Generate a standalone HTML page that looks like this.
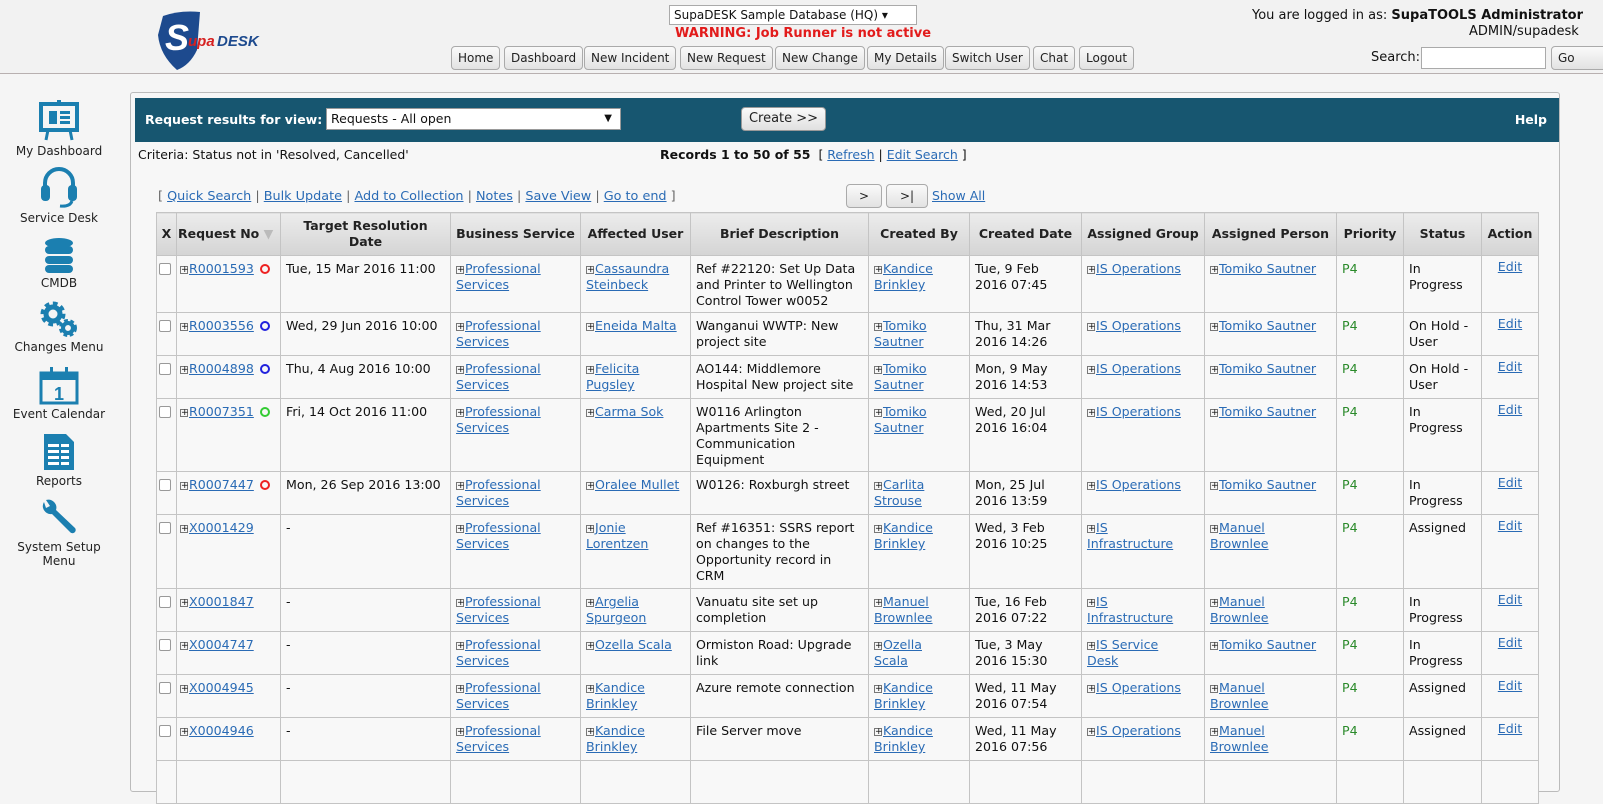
<!DOCTYPE html>
<html><head><meta charset="utf-8"><style>
*{box-sizing:border-box}
body{margin:0;width:1603px;height:784px;overflow:hidden;background:#f5f5f5;font-family:"DejaVu Sans","Liberation Sans",sans-serif;font-size:12px;color:#111;position:relative}
a{color:#2a6bb5;text-decoration:underline}
.top{position:absolute;left:0;top:0;width:1603px;height:74px;background:#f2f2f2;border-bottom:1px solid #b8b0b0}
.btn{position:absolute;top:46px;height:24px;border:1px solid #aaa;border-radius:4px;background:linear-gradient(#fafafa,#e2e2e2);font-size:12px;line-height:22px;padding:0 6px;color:#222}
.side{position:absolute;left:0;width:118px;text-align:center;font-size:12px;color:#222}
.side svg{display:block;margin:0 auto 2px}
.panel{position:absolute;left:130px;top:92px;width:1430px;height:700px;border:1px solid #bbb;background:#f7f7f7;border-radius:3px}
.bar{position:absolute;left:135px;top:98px;width:1424px;height:44px;background:#175670;color:#fff;font-weight:bold;font-size:12.5px}
table{position:absolute;left:156px;top:212px;border-collapse:collapse;table-layout:fixed;width:1382px}
td,th{border:1px solid #c4c4c4;vertical-align:top;padding:5px 5px 0 5px;line-height:16px;font-size:12.6px;white-space:nowrap;overflow:hidden}
th{background:linear-gradient(#ececec,#d4d4d4);font-size:12.5px;vertical-align:middle;padding:0 3px;color:#222}
td{background:#f8f8f8}
.p{font-size:9px;border:1px solid #777;display:inline-block;width:8px;height:8px;line-height:6px;text-align:center;margin-right:1px;vertical-align:1px}
.g{color:#2a8a2a}
.cb{width:12px;height:12px;border:1px solid #999;border-radius:2px;background:#fff;display:block;margin:2px 0 0 -1px}
.o{display:inline-block;width:10px;height:10px;border-radius:50%;border:2px solid;margin-left:6px;vertical-align:-1px}
</style></head><body>
<div class="top">
<svg style="position:absolute;left:155px;top:10px" width="135" height="62"><path d="M8 6 Q25 0 45 2 L42 40 Q35 55 22 60 Q5 45 3 25 Z" fill="#1d4a8e"/><text x="10" y="40" font-family="Liberation Sans" font-weight="bold" font-style="italic" font-size="36" fill="#fff">S</text><text x="33" y="36" font-family="Liberation Sans" font-weight="bold" font-style="italic" font-size="15" fill="#d62020">upa</text><text x="62" y="36" font-family="Liberation Sans" font-weight="bold" font-style="italic" font-size="15" fill="#1d4a8e">DESK</text></svg>
<div style="position:absolute;left:669px;top:5px;width:248px;height:20px;border:1px solid #aaa;background:#fff;font-size:12px;line-height:18px;padding-left:4px">SupaDESK Sample Database (HQ) ▾</div>
<div style="position:absolute;left:675px;top:26px;color:#e21b1b;font-weight:bold;font-size:13px">WARNING: Job Runner is not active</div>
<div class="btn" style="left:451px">Home</div><div class="btn" style="left:504px">Dashboard</div><div class="btn" style="left:584px">New Incident</div><div class="btn" style="left:680px">New Request</div><div class="btn" style="left:775px">New Change</div><div class="btn" style="left:867px">My Details</div><div class="btn" style="left:945px">Switch User</div><div class="btn" style="left:1033px">Chat</div><div class="btn" style="left:1079px">Logout</div>
<div style="position:absolute;left:1252px;top:8px;font-size:13px;white-space:nowrap">You are logged in as: <b>SupaTOOLS Administrator</b></div>
<div style="position:absolute;left:1469px;top:24px;font-size:13px;white-space:nowrap">ADMIN/supadesk</div>
<div style="position:absolute;left:1371px;top:50px;font-size:13px">Search:</div>
<div style="position:absolute;left:1421px;top:47px;width:125px;height:22px;border:1px solid #aaa;background:#fff"></div>
<div class="btn" style="left:1551px;width:60px">Go</div>
</div>
<div class="side" style="top:100px"><svg width="42" height="42" viewBox="0 0 42 42"><rect x="3" y="4" width="36" height="26" fill="none" stroke="#1b7fb0" stroke-width="4"/><rect x="11" y="11" width="8" height="13" fill="#1b7fb0"/><rect x="22" y="11" width="10" height="3" fill="#1b7fb0"/><rect x="22" y="16" width="10" height="3" fill="#1b7fb0"/><rect x="22" y="21" width="10" height="3" fill="#1b7fb0"/><rect x="19" y="0" width="4" height="4" fill="#1b7fb0"/><path d="M10 30 L8 40 M32 30 L34 40" stroke="#1b7fb0" stroke-width="3"/></svg>My Dashboard</div>
<div class="side" style="top:165px"><svg width="42" height="44" viewBox="0 0 42 44"><path d="M7 24 V18 A14 14 0 0 1 35 18 V24" fill="none" stroke="#1b7fb0" stroke-width="4"/><rect x="3" y="20" width="9" height="16" rx="4" fill="#1b7fb0"/><rect x="30" y="20" width="9" height="16" rx="4" fill="#1b7fb0"/><path d="M34 36 Q32 42 22 41" fill="none" stroke="#1b7fb0" stroke-width="3"/></svg>Service Desk</div>
<div class="side" style="top:238px"><svg width="34" height="36" viewBox="0 0 34 36"><ellipse cx="17" cy="5" rx="14" ry="5" fill="#1b7fb0"/><rect x="3" y="8" width="28" height="8" rx="4" fill="#1b7fb0"/><rect x="3" y="18" width="28" height="8" rx="4" fill="#1b7fb0"/><rect x="3" y="27" width="28" height="8" rx="4" fill="#1b7fb0"/></svg>CMDB</div>
<div class="side" style="top:300px"><svg width="42" height="38" viewBox="0 0 42 38"><circle cx="15" cy="14" r="9" fill="none" stroke="#1b7fb0" stroke-width="7" stroke-dasharray="4 3"/><circle cx="15" cy="14" r="7" fill="none" stroke="#1b7fb0" stroke-width="5"/><circle cx="30" cy="28" r="6" fill="none" stroke="#1b7fb0" stroke-width="6" stroke-dasharray="3 2"/><circle cx="30" cy="28" r="5" fill="none" stroke="#1b7fb0" stroke-width="4"/></svg>Changes Menu</div>
<div class="side" style="top:367px"><svg width="42" height="38" viewBox="0 0 42 38"><rect x="3" y="6" width="36" height="30" fill="none" stroke="#1b7fb0" stroke-width="3"/><rect x="3" y="6" width="36" height="7" fill="#1b7fb0"/><rect x="12" y="0" width="3" height="9" fill="#1b7fb0"/><rect x="27" y="0" width="3" height="9" fill="#1b7fb0"/><text x="21" y="33" text-anchor="middle" font-family="Liberation Sans" font-weight="bold" font-size="18" fill="#1b7fb0">1</text></svg>Event Calendar</div>
<div class="side" style="top:432px"><svg width="34" height="40" viewBox="0 0 34 40"><path d="M2 2 H24 L32 10 V38 H2 Z" fill="#1b7fb0"/><g fill="#fff"><rect x="6" y="12" width="11" height="3"/><rect x="19" y="12" width="8" height="3"/><rect x="6" y="18" width="11" height="3"/><rect x="19" y="18" width="8" height="3"/><rect x="6" y="24" width="11" height="3"/><rect x="19" y="24" width="8" height="3"/><rect x="6" y="30" width="11" height="3"/><rect x="19" y="30" width="8" height="3"/></g></svg>Reports</div>
<div class="side" style="top:498px"><svg width="42" height="40" viewBox="0 0 42 40"><path d="M6 4 A8 8 0 0 0 14 16 L32 34 A3 3 0 0 0 37 30 L18 12 A8 8 0 0 0 8 2 L12 8 L8 10 Z" fill="#1b7fb0"/></svg>System Setup<br>Menu</div>
<div class="panel"></div>
<div class="bar"><span style="position:absolute;left:10px;top:14px;white-space:nowrap">Request results for view:</span>
<div style="position:absolute;left:191px;top:10px;width:295px;height:22px;background:#fff;border:1px solid #999;color:#111;font-weight:normal;line-height:20px;padding-left:4px">Requests - All open<span style="position:absolute;right:8px;font-size:10px">▼</span></div>
<div style="position:absolute;left:606px;top:9px;width:85px;height:24px;background:linear-gradient(#fafafa,#e0e0e0);border:1px solid #999;border-radius:4px;color:#222;font-weight:normal;line-height:22px;text-align:center;font-size:13px">Create &gt;&gt;</div>
<span style="position:absolute;right:12px;top:14px">Help</span></div>
<div style="position:absolute;left:138px;top:147px;font-size:12.5px">Criteria: Status not in 'Resolved, Cancelled'</div>
<div style="position:absolute;left:660px;top:147px;font-size:12.5px"><b>Records 1 to 50 of 55</b> &nbsp;[ <a>Refresh</a> | <a>Edit Search</a> ]</div>
<div style="position:absolute;left:158px;top:189px;font-size:12.8px;color:#666">[ <a>Quick Search</a> | <a>Bulk Update</a> | <a>Add to Collection</a> | <a>Notes</a> | <a>Save View</a> | <a>Go to end</a> ]</div>
<div class="btn" style="left:846px;top:184px;width:36px;text-align:center">&gt;</div><div class="btn" style="left:886px;top:184px;width:42px;text-align:center">&gt;|</div>
<a style="position:absolute;left:932px;top:188px;font-size:12.5px">Show All</a>
<table>
<colgroup><col style="width:20px"><col style="width:104px"><col style="width:170px"><col style="width:130px"><col style="width:110px"><col style="width:178px"><col style="width:101px"><col style="width:112px"><col style="width:123px"><col style="width:132px"><col style="width:67px"><col style="width:78px"><col style="width:57px"></colgroup>
<tr style="height:43px"><th style="padding:0">X</th><th style="text-align:left;padding:0 1px">Request No <span style="color:#bbb">▼</span></th><th>Target Resolution<br>Date</th><th>Business Service</th><th>Affected User</th><th>Brief Description</th><th>Created By</th><th>Created Date</th><th>Assigned Group</th><th>Assigned Person</th><th>Priority</th><th>Status</th><th>Action</th></tr>
<tr style="height:57px"><td style="padding:5px 3px"><span class="cb"></span></td><td style="padding-left:3px"><span class="p">+</span><a>R0001593</a><span class="o" style="border-color:#e22"></span></td><td>Tue, 15 Mar 2016 11:00</td><td><span class="p">+</span><a>Professional<br>Services</a></td><td><span class="p">+</span><a>Cassaundra<br>Steinbeck</a></td><td>Ref #22120: Set Up Data<br>and Printer to Wellington<br>Control Tower w0052</td><td><span class="p">+</span><a>Kandice<br>Brinkley</a></td><td>Tue, 9 Feb<br>2016 07:45</td><td><span class="p">+</span><a>IS Operations</a></td><td><span class="p">+</span><a>Tomiko Sautner</a></td><td class="g">P4</td><td>In<br>Progress</td><td style="text-align:center;padding-top:3px"><a>Edit</a></td></tr>
<tr style="height:43px"><td style="padding:5px 3px"><span class="cb"></span></td><td style="padding-left:3px"><span class="p">+</span><a>R0003556</a><span class="o" style="border-color:#22d"></span></td><td>Wed, 29 Jun 2016 10:00</td><td><span class="p">+</span><a>Professional<br>Services</a></td><td><span class="p">+</span><a>Eneida Malta</a></td><td>Wanganui WWTP: New<br>project site</td><td><span class="p">+</span><a>Tomiko<br>Sautner</a></td><td>Thu, 31 Mar<br>2016 14:26</td><td><span class="p">+</span><a>IS Operations</a></td><td><span class="p">+</span><a>Tomiko Sautner</a></td><td class="g">P4</td><td>On Hold -<br>User</td><td style="text-align:center;padding-top:3px"><a>Edit</a></td></tr>
<tr style="height:43px"><td style="padding:5px 3px"><span class="cb"></span></td><td style="padding-left:3px"><span class="p">+</span><a>R0004898</a><span class="o" style="border-color:#22d"></span></td><td>Thu, 4 Aug 2016 10:00</td><td><span class="p">+</span><a>Professional<br>Services</a></td><td><span class="p">+</span><a>Felicita<br>Pugsley</a></td><td>AO144: Middlemore<br>Hospital New project site</td><td><span class="p">+</span><a>Tomiko<br>Sautner</a></td><td>Mon, 9 May<br>2016 14:53</td><td><span class="p">+</span><a>IS Operations</a></td><td><span class="p">+</span><a>Tomiko Sautner</a></td><td class="g">P4</td><td>On Hold -<br>User</td><td style="text-align:center;padding-top:3px"><a>Edit</a></td></tr>
<tr style="height:73px"><td style="padding:5px 3px"><span class="cb"></span></td><td style="padding-left:3px"><span class="p">+</span><a>R0007351</a><span class="o" style="border-color:#3c3"></span></td><td>Fri, 14 Oct 2016 11:00</td><td><span class="p">+</span><a>Professional<br>Services</a></td><td><span class="p">+</span><a>Carma Sok</a></td><td>W0116 Arlington<br>Apartments Site 2 -<br>Communication<br>Equipment</td><td><span class="p">+</span><a>Tomiko<br>Sautner</a></td><td>Wed, 20 Jul<br>2016 16:04</td><td><span class="p">+</span><a>IS Operations</a></td><td><span class="p">+</span><a>Tomiko Sautner</a></td><td class="g">P4</td><td>In<br>Progress</td><td style="text-align:center;padding-top:3px"><a>Edit</a></td></tr>
<tr style="height:43px"><td style="padding:5px 3px"><span class="cb"></span></td><td style="padding-left:3px"><span class="p">+</span><a>R0007447</a><span class="o" style="border-color:#e22"></span></td><td>Mon, 26 Sep 2016 13:00</td><td><span class="p">+</span><a>Professional<br>Services</a></td><td><span class="p">+</span><a>Oralee Mullet</a></td><td>W0126: Roxburgh street</td><td><span class="p">+</span><a>Carlita<br>Strouse</a></td><td>Mon, 25 Jul<br>2016 13:59</td><td><span class="p">+</span><a>IS Operations</a></td><td><span class="p">+</span><a>Tomiko Sautner</a></td><td class="g">P4</td><td>In<br>Progress</td><td style="text-align:center;padding-top:3px"><a>Edit</a></td></tr>
<tr style="height:74px"><td style="padding:5px 3px"><span class="cb"></span></td><td style="padding-left:3px"><span class="p">+</span><a>X0001429</a></td><td>-</td><td><span class="p">+</span><a>Professional<br>Services</a></td><td><span class="p">+</span><a>Jonie<br>Lorentzen</a></td><td>Ref #16351: SSRS report<br>on changes to the<br>Opportunity record in<br>CRM</td><td><span class="p">+</span><a>Kandice<br>Brinkley</a></td><td>Wed, 3 Feb<br>2016 10:25</td><td><span class="p">+</span><a>IS<br>Infrastructure</a></td><td><span class="p">+</span><a>Manuel<br>Brownlee</a></td><td class="g">P4</td><td>Assigned</td><td style="text-align:center;padding-top:3px"><a>Edit</a></td></tr>
<tr style="height:43px"><td style="padding:5px 3px"><span class="cb"></span></td><td style="padding-left:3px"><span class="p">+</span><a>X0001847</a></td><td>-</td><td><span class="p">+</span><a>Professional<br>Services</a></td><td><span class="p">+</span><a>Argelia<br>Spurgeon</a></td><td>Vanuatu site set up<br>completion</td><td><span class="p">+</span><a>Manuel<br>Brownlee</a></td><td>Tue, 16 Feb<br>2016 07:22</td><td><span class="p">+</span><a>IS<br>Infrastructure</a></td><td><span class="p">+</span><a>Manuel<br>Brownlee</a></td><td class="g">P4</td><td>In<br>Progress</td><td style="text-align:center;padding-top:3px"><a>Edit</a></td></tr>
<tr style="height:43px"><td style="padding:5px 3px"><span class="cb"></span></td><td style="padding-left:3px"><span class="p">+</span><a>X0004747</a></td><td>-</td><td><span class="p">+</span><a>Professional<br>Services</a></td><td><span class="p">+</span><a>Ozella Scala</a></td><td>Ormiston Road: Upgrade<br>link</td><td><span class="p">+</span><a>Ozella<br>Scala</a></td><td>Tue, 3 May<br>2016 15:30</td><td><span class="p">+</span><a>IS Service<br>Desk</a></td><td><span class="p">+</span><a>Tomiko Sautner</a></td><td class="g">P4</td><td>In<br>Progress</td><td style="text-align:center;padding-top:3px"><a>Edit</a></td></tr>
<tr style="height:43px"><td style="padding:5px 3px"><span class="cb"></span></td><td style="padding-left:3px"><span class="p">+</span><a>X0004945</a></td><td>-</td><td><span class="p">+</span><a>Professional<br>Services</a></td><td><span class="p">+</span><a>Kandice<br>Brinkley</a></td><td>Azure remote connection</td><td><span class="p">+</span><a>Kandice<br>Brinkley</a></td><td>Wed, 11 May<br>2016 07:54</td><td><span class="p">+</span><a>IS Operations</a></td><td><span class="p">+</span><a>Manuel<br>Brownlee</a></td><td class="g">P4</td><td>Assigned</td><td style="text-align:center;padding-top:3px"><a>Edit</a></td></tr>
<tr style="height:43px"><td style="padding:5px 3px"><span class="cb"></span></td><td style="padding-left:3px"><span class="p">+</span><a>X0004946</a></td><td>-</td><td><span class="p">+</span><a>Professional<br>Services</a></td><td><span class="p">+</span><a>Kandice<br>Brinkley</a></td><td>File Server move</td><td><span class="p">+</span><a>Kandice<br>Brinkley</a></td><td>Wed, 11 May<br>2016 07:56</td><td><span class="p">+</span><a>IS Operations</a></td><td><span class="p">+</span><a>Manuel<br>Brownlee</a></td><td class="g">P4</td><td>Assigned</td><td style="text-align:center;padding-top:3px"><a>Edit</a></td></tr>
<tr style="height:43px"><td></td><td></td><td></td><td></td><td></td><td></td><td></td><td></td><td></td><td></td><td></td><td></td><td></td></tr>
</table>
</body></html>
